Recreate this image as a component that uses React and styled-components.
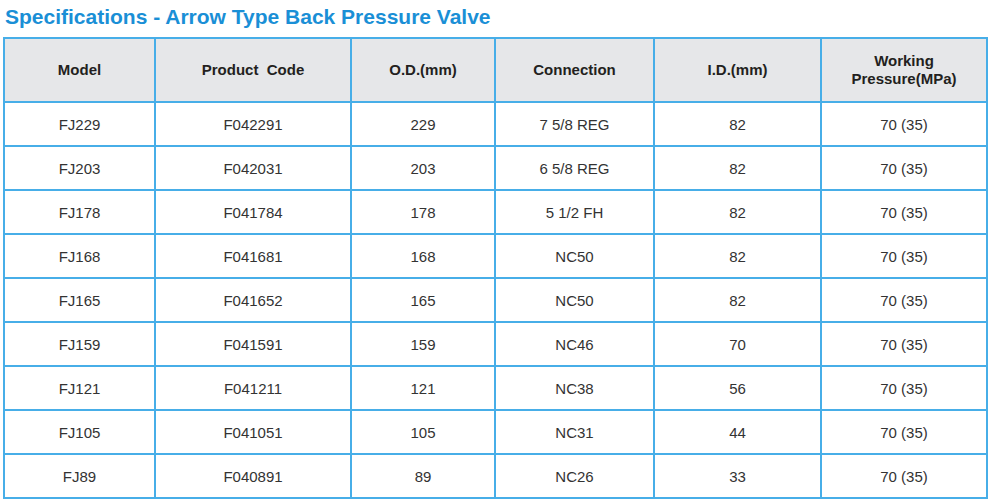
import React from 'react';
import styled, { createGlobalStyle } from 'styled-components';

const GlobalStyle = createGlobalStyle`
    body {
        margin: 0;
        background: #fff;
        font-family: "Liberation Sans", Arial, sans-serif;
    }
`

const Page = styled.div`
    width: 990px;
    height: 499px;
    padding: 5px 3px 0 3px;
    box-sizing: border-box;
`

const Title = styled.h1`
    margin: 0 0 8px 2px;
    font-size: 21px;
    line-height: 24px;
    font-weight: bold;
    color: #1a8fd6;
`

const Table = styled.table`
    width: 983px;
    border-collapse: collapse;
    table-layout: fixed;
    border: 2px solid #47aee8;
`

const HeadCell = styled.th`
    height: 62px;
    padding: 0;
    background: #e6e7e9;
    border: 2px solid #47aee8;
    color: #231f20;
    font-size: 15px;
    line-height: 18px;
    font-weight: bold;
    text-align: center;
    vertical-align: middle;
    white-space: pre-wrap;
`

const Cell = styled.td`
    height: 42px;
    padding: 0;
    border: 2px solid #47aee8;
    color: #333;
    font-size: 15px;
    text-align: center;
    vertical-align: middle;
`

const columns = [
    { label: "Model", width: 151 },
    { label: "Product  Code", width: 196 },
    { label: "O.D.(mm)", width: 144 },
    { label: "Connection", width: 159 },
    { label: "I.D.(mm)", width: 167 },
    { label: "Working\nPressure(MPa)", width: 166 },
]

const rows = [
    ["FJ229", "F042291", "229", "7 5/8 REG", "82", "70 (35)"],
    ["FJ203", "F042031", "203", "6 5/8 REG", "82", "70 (35)"],
    ["FJ178", "F041784", "178", "5 1/2 FH", "82", "70 (35)"],
    ["FJ168", "F041681", "168", "NC50", "82", "70 (35)"],
    ["FJ165", "F041652", "165", "NC50", "82", "70 (35)"],
    ["FJ159", "F041591", "159", "NC46", "70", "70 (35)"],
    ["FJ121", "F041211", "121", "NC38", "56", "70 (35)"],
    ["FJ105", "F041051", "105", "NC31", "44", "70 (35)"],
    ["FJ89", "F040891", "89", "NC26", "33", "70 (35)"],
]

export default function App() {
    return (
        <Page>
            <GlobalStyle />
            <Title>Specifications - Arrow Type Back Pressure Valve</Title>
            <Table>
                <colgroup>
                    {columns.map((c) => <col key={c.label} style={{ width: c.width }} />)}
                </colgroup>
                <thead>
                    <tr>
                        {columns.map((c) => <HeadCell key={c.label}>{c.label}</HeadCell>)}
                    </tr>
                </thead>
                <tbody>
                    {rows.map((r) => (
                        <tr key={r[0]}>
                            {r.map((v, i) => <Cell key={i}>{v}</Cell>)}
                        </tr>
                    ))}
                </tbody>
            </Table>
        </Page>
    );
}
